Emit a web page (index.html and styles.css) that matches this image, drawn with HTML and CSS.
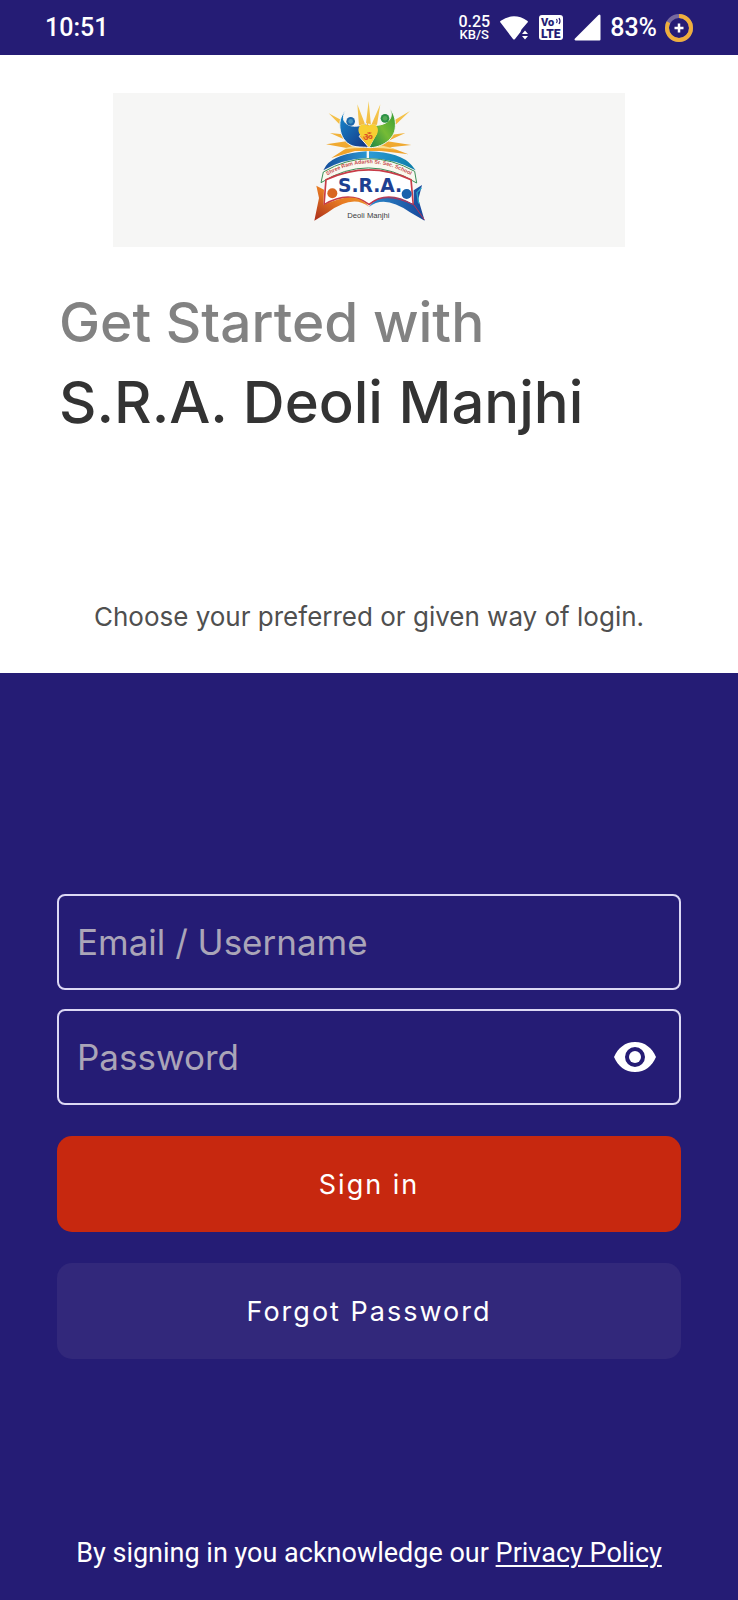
FILE: index.html
```html
<!DOCTYPE html>
<html lang="en">
<head>
<meta charset="utf-8">
<meta name="viewport" content="width=device-width, initial-scale=1">
<title>S.R.A. Deoli Manjhi</title>
<link rel="stylesheet" href="styles.css">
</head>
<body>
<header class="status">
  <time class="clock">10:51</time>
  <div class="indicators">
    <div class="speed"><span class="rate">0.25</span><span class="unit">KB/S</span></div>
    <svg class="wifi" width="30" height="26" viewBox="0 0 30 26" aria-hidden="true">
      <path fill="#fff" d="M1.500 7.500Q0.500 6.500 1.800 5.700Q15 -3 28.200 5.700Q29.500 6.500 28.500 7.500L22.500 14.500L21.500 17L16 24Q15 25 14 24Z"/>
      <path fill="#fff" d="M26 15.500l3 3.500h-6zM26 24.500l3-3.500h-6z"/>
    </svg>
    <svg class="volte" width="24" height="25" viewBox="0 0 24 25" aria-hidden="true">
      <rect width="24" height="25" rx="3" fill="#fff"/>
      <text class="volte-text" x="2" y="11" font-size="11">Vo</text>
      <text class="volte-text" x="2" y="23" font-size="12">LTE</text>
      <path d="M17.500 4q1.500 2 0 4M20 3q2 3 0 6" fill="none" stroke="#251c75" stroke-width="1.200"/>
    </svg>
    <svg class="signal" width="27" height="27" viewBox="0 0 27 27" aria-hidden="true"><path fill="#fff" d="M1 24.500L24.500 1Q26.500 -.500 26.500 2V25.500Q26.500 26.500 25.500 26.500H1.500Q-.200 26 1 24.500Z"/></svg>
    <span class="battery">83%</span>
    <svg class="ring" width="30" height="30" viewBox="0 0 30 30" aria-hidden="true">
      <circle cx="15" cy="15" r="12" fill="none" stroke="#77699f" stroke-width="4"/>
      <circle cx="15" cy="15" r="12" fill="none" stroke="#efae3c" stroke-width="4" pathLength="100" stroke-dasharray="83 17" transform="rotate(-90 15 15)"/>
      <path d="M15 10.500v9M10.500 15h9" stroke="#fff" stroke-width="2.500"/>
    </svg>
  </div>
</header>

<section class="intro">
  <div class="banner">
    <svg class="logo" width="140" height="137" viewBox="-3 6 420 411" role="img" aria-label="S.R.A. Deoli Manjhi school logo">
      <defs>
        <linearGradient id="blue" x1="0" y1="0" x2="1" y2="1"><stop offset="0" stop-color="#178bd0"/><stop offset="1" stop-color="#15317f"/></linearGradient>
        <linearGradient id="green" x1="1" y1="0" x2="0" y2="1"><stop offset="0" stop-color="#2d9a35"/><stop offset=".5" stop-color="#76bb36"/><stop offset="1" stop-color="#178345"/></linearGradient>
        <linearGradient id="arch"><stop offset="0" stop-color="#164d9b"/><stop offset=".5" stop-color="#2b9ad4"/><stop offset="1" stop-color="#0b7da8"/></linearGradient>
        <linearGradient id="orange" x1="0" y1="1" x2="1" y2="0"><stop offset="0" stop-color="#a92c1b"/><stop offset=".5" stop-color="#e77a22"/><stop offset="1" stop-color="#f0a12b"/></linearGradient>
        <linearGradient id="sun" x1="0" y1="0" x2="0" y2="1"><stop offset="0" stop-color="#f6cf56"/><stop offset="1" stop-color="#ee9e25"/></linearGradient>
        <linearGradient id="wing"><stop offset="0" stop-color="#2b8acb"/><stop offset="1" stop-color="#18479a"/></linearGradient>
        <path id="motto" d="M72 260Q204 174 345 260"/>
      </defs>
      <path fill="url(#sun)" d="M206 30L213 104L241 40L228 120L330 60L252 134L316 126L262 151L334 162L270 169L325 190L244 180L165 180L94 201L140 171L78 160L144 150L90 126L150 132L86 67L178 116L172 40L197 104Z"/>
      <path fill="#fff3b0" opacity=".7" d="M120 176Q205 145 292 176Q205 164 120 176Z"/>
      <path fill="url(#blue)" stroke="#f6f6f5" stroke-width="3" d="M136 61C107 83 115 160 168 167C184 169 199 168 207 170L178 137L200 97C177 108 155 108 142 100C127 91 128 75 136 61Z"/>
      <circle cx="152" cy="91" r="13" fill="#1c67aa"/>
      <path fill="url(#green)" stroke="#f6f6f5" stroke-width="3" d="M268 51C282 73 270 92 250 99C237 104 218 105 205 99L229 128L207 170C244 171 285 145 286 107C288 82 279 64 268 51Z"/>
      <circle cx="255" cy="82" r="13" fill="#2c9145"/>
      <circle cx="152" cy="91" r="7" fill="#4494bf"/>
      <circle cx="255" cy="82" r="7" fill="#54a957"/>
      <path fill="#f7cf32" d="M204 106C184 88 166 112 181 132L207 169L231 130C242 106 220 90 204 106Z"/>
      <text class="om" x="188" y="146" font-size="30">ॐ</text>
      <path fill="url(#arch)" d="M78 224Q106 188 200 181V201Q124 205 70 238ZM207 181Q302 184 335 223L347 238Q286 204 207 201Z"/>
      <path fill="#f9f8ef" stroke="#3c8e57" stroke-width="3" d="M70 243Q206 164 344 241L350 276Q204 186 63 275Z"/>
      <text class="motto" font-size="16"><textPath href="#motto" startOffset="12">Shree Ram Adarsh Sr. Sec. School</textPath></text>
      <path fill="#fff" stroke="#c83c47" stroke-width="5" d="M78 266Q207 207 333 266L340 343Q264 295 207 340Q147 296 72 341Z"/>
      <path fill="url(#orange)" d="M49 284L72 296L70 343Q169 293 207 348Q160 308 82 365L43 389L57 321Z"/>
      <path fill="url(#wing)" d="M366 282L341 298L342 340Q246 292 207 348Q254 310 330 364L374 389L355 325Z"/>
      <path fill="none" stroke="#ba3054" stroke-width="3" d="M207 342Q252 298 342 342L373 386"/>
      <path fill="none" stroke="#29a6c7" stroke-width="4" d="M364 291L351 305L356 337"/>
      <circle cx="97" cy="307" r="15" fill="#d96721"/>
      <circle cx="320" cy="309" r="15" fill="#1761ac"/>
      <text class="initials" x="114" y="303" font-size="56">S.R.A.</text>
      <text class="place" x="142" y="380" font-size="23">Deoli Manjhi</text>
    </svg>
  </div>
  <h1 class="title"><span class="lead">Get Started with</span><span class="school">S.R.A. Deoli Manjhi</span></h1>
  <p class="hint">Choose your preferred or given way of login.</p>
</section>

<main class="panel">
  <form class="login">
    <div class="field"><input class="input" type="text" placeholder="Email / Username" aria-label="Email / Username"></div>
    <div class="field">
      <input class="input" type="password" placeholder="Password" aria-label="Password">
      <button class="reveal" type="button" aria-label="Show password">
        <svg width="42" height="30" viewBox="0 0 42 30" aria-hidden="true"><path fill="#fff" fill-rule="evenodd" d="M21 0C11 0 4 6 0 15C4 24 11 30 21 30S38 24 42 15C38 6 31 0 21 0ZM21 5A10 10 0 1 1 21 25A10 10 0 1 1 21 5Z"/><circle cx="21" cy="15" r="6" fill="#fff"/></svg>
      </button>
    </div>
    <button class="button primary" type="submit">Sign in</button>
    <button class="button secondary" type="button">Forgot Password</button>
  </form>
  <p class="legal">By signing in you acknowledge our <a class="link" href="#privacy">Privacy Policy</a></p>
</main>
</body>
</html>
```
FILE: styles.css
```css
* { box-sizing: border-box; }

body {
  margin: 0;
  min-height: 100vh;
  display: flex;
  flex-direction: column;
  background: #fff;
  font-family: Inter, "Open Sans", sans-serif;
}

.status {
  display: flex;
  align-items: center;
  justify-content: space-between;
  height: 55px;
  padding: 0 44px 0 45px;
  background: #251c75;
  color: #fff;
  font-family: Roboto, sans-serif;
  font-weight: 500;
}

.clock { font-size: 25px; }

.indicators { display: flex; align-items: center; }

.speed {
  display: flex;
  flex-direction: column;
  align-items: center;
  margin-right: 9px;
  line-height: 13px;
}

.rate { font-size: 16px; }
.unit { font-size: 13px; }
.wifi { margin-right: 10px; }
.volte { margin-right: 11px; }
.signal { margin-right: 9px; }
.battery { margin-right: 7px; font-size: 25px; }

.volte-text {
  font-family: Roboto, sans-serif;
  font-weight: 900;
  fill: #251c75;
}

.intro { padding: 38px 57px 40px; }

.banner {
  display: flex;
  justify-content: center;
  width: 82%;
  margin: 0 auto;
  padding-bottom: 17px;
  background: #f6f6f5;
}

.logo { display: block; }
.om { font-family: "Noto Sans", sans-serif; font-weight: 700; fill: #dc5526; }
.motto { font-family: "Liberation Sans", sans-serif; font-weight: 700; fill: #c74b4b; }
.initials { font-family: "DejaVu Sans", sans-serif; font-weight: 700; fill: #1d3f91; }
.place { font-family: "Liberation Sans", sans-serif; fill: #3c3c40; }

.title {
  display: flex;
  flex-direction: column;
  margin: 35px 0 0;
  padding-left: 2px;
  font-weight: 500;
  line-height: 80px;
}

.lead { color: #828282; font-size: 55px; }
.school { color: #333; font-size: 58px; }

.hint {
  margin: 159px 0 0;
  color: #4f4f4f;
  font-size: 26px;
  line-height: 32px;
  text-align: center;
}

.panel {
  flex: 1;
  display: flex;
  flex-direction: column;
  justify-content: space-between;
  padding: 221px 57px 31px;
  background: #251c75;
}

.login { display: flex; flex-direction: column; }

.field {
  display: flex;
  align-items: center;
  height: 96px;
  margin-bottom: 19px;
  padding: 0 23px 0 18px;
  border: 2px solid #dcd8f4;
  border-radius: 8px;
}

.input {
  flex: 1;
  min-width: 0;
  padding: 0;
  border: 0;
  outline: 0;
  background: transparent;
  color: #fff;
  font-family: inherit;
  font-size: 35px;
}

.input::placeholder { color: #aaa5b8; opacity: 1; }

.reveal {
  display: flex;
  padding: 0;
  border: 0;
  background: transparent;
}

.button {
  height: 96px;
  padding: 0;
  border: 0;
  border-radius: 15px;
  color: #fff;
  font-family: inherit;
  font-size: 27px;
  letter-spacing: 2px;
}

.primary { margin-top: 12px; background: #c7280f; }
.secondary { margin-top: 31px; background: #32287b; }

.legal {
  margin: 0;
  color: #fff;
  font-family: Roboto, sans-serif;
  font-size: 27px;
  line-height: 32px;
  text-align: center;
}

.link { color: inherit; text-decoration-thickness: 2px; text-underline-offset: 3px; }
```
